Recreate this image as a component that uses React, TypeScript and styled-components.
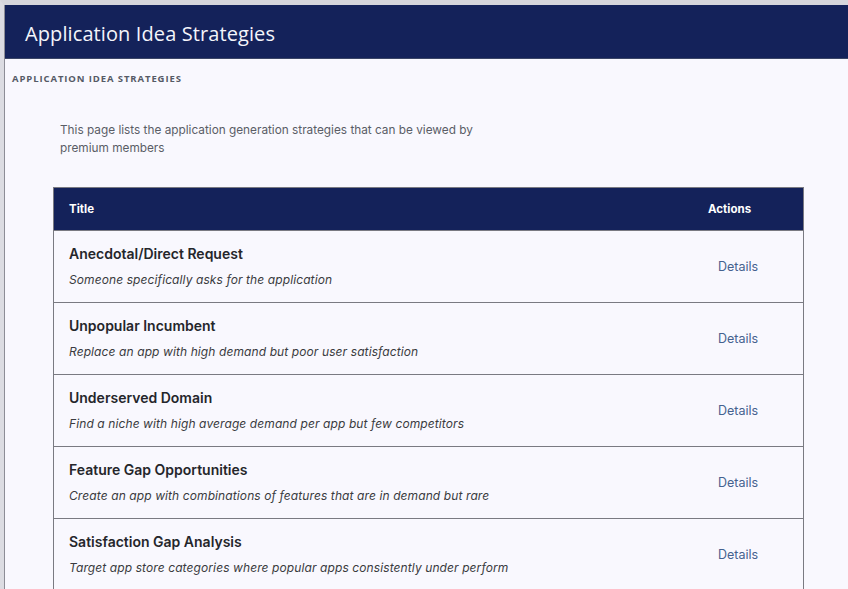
import React from 'react';
import styled, { createGlobalStyle } from 'styled-components';

const GlobalStyle = createGlobalStyle`
  html, body {
    margin: 0;
    padding: 0;
    background: #f9f8fe;
  }
  body {
    font-family: Inter, 'Liberation Sans', sans-serif;
  }
`;

const Frame = styled.div`
  min-height: 589px;
  border-top: 5px solid #d6d6dc;
  border-left: 4px solid #dcdce2;
  box-sizing: border-box;
`;

const Shell = styled.div`
  min-height: 584px;
  border-left: 1px solid #8d8d96;
  background: #f9f8fe;
`;

const TopBar = styled.header`
  height: 54px;
  box-sizing: border-box;
  padding: 3px 0 0 20px;
  background: #14225a;
  border-bottom: 1px solid #3a4566;
  display: flex;
  align-items: center;
`;

const TopTitle = styled.h1`
  margin: 0;
  color: #f4f5fb;
  font-family: 'Open Sans', sans-serif;
  font-weight: 400;
  font-size: 20px;
  letter-spacing: 0.1px;
`;

const Crumb = styled.div`
  padding: 13px 0 0 7px;
  font-family: 'Open Sans', sans-serif;
  font-size: 9.5px;
  font-weight: 700;
  letter-spacing: 0.9px;
  color: #555a66;
  text-transform: uppercase;
`;

const Intro = styled.p`
  margin: 36px 0 0 55px;
  max-width: 430px;
  font-size: 11.8px;
  line-height: 18px;
  color: #5a5d66;
`;

const Table = styled.table`
  margin: 30px 0 0 48px;
  width: 751px;
  border-collapse: collapse;
  border: 1px solid #7a7a82;
`;

const HeadCell = styled.th<{ $width?: number }>`
  height: 42px;
  padding: 0 15px;
  background: #14225a;
  color: #ffffff;
  font-size: 11.5px;
  font-weight: 700;
  text-align: left;
  width: ${({ $width }) => ($width ? `${$width}px` : 'auto')};
`;

const Row = styled.tr`
  border-top: 1px solid #7a7a82;
`;

const Cell = styled.td<{ $action?: boolean }>`
  height: 72px;
  padding: 0 15px ${({ $action }) => ($action ? '4px' : '0')};
  vertical-align: middle;
  box-sizing: border-box;
`;

const Name = styled.div`
  font-size: 14px;
  font-weight: 600;
  color: #25262b;
  line-height: 18px;
`;

const Blurb = styled.div`
  margin-top: 8px;
  font-size: 12px;
  font-style: italic;
  color: #3a3b40;
  line-height: 18px;
  letter-spacing: 0.1px;
`;

const DetailsLink = styled.a`
  display: inline-block;
  padding: 0 10px;
  font-size: 12.5px;
  font-weight: 400;
  color: #45618f;
  text-decoration: none;
  cursor: pointer;
`;

const strategies = [
  { title: 'Anecdotal/Direct Request', text: 'Someone specifically asks for the application' },
  { title: 'Unpopular Incumbent', text: 'Replace an app with high demand but poor user satisfaction' },
  { title: 'Underserved Domain', text: 'Find a niche with high average demand per app but few competitors' },
  { title: 'Feature Gap Opportunities', text: 'Create an app with combinations of features that are in demand but rare' },
  { title: 'Satisfaction Gap Analysis', text: 'Target app store categories where popular apps consistently under perform' },
];

export default function App() {
  return (
    <>
      <GlobalStyle />
      <Frame>
        <Shell>
          <TopBar>
            <TopTitle>Application Idea Strategies</TopTitle>
          </TopBar>
          <Crumb>Application Idea Strategies</Crumb>
          <Intro>
            This page lists the application generation strategies that can be viewed by premium members
          </Intro>
          <Table>
            <thead>
              <tr>
                <HeadCell>Title</HeadCell>
                <HeadCell $width={80}>Actions</HeadCell>
              </tr>
            </thead>
            <tbody>
              {strategies.map((s) => (
                <Row key={s.title}>
                  <Cell>
                    <Name>{s.title}</Name>
                    <Blurb>{s.text}</Blurb>
                  </Cell>
                  <Cell $action>
                    <DetailsLink>Details</DetailsLink>
                  </Cell>
                </Row>
              ))}
            </tbody>
          </Table>
        </Shell>
      </Frame>
    </>
  );
}
